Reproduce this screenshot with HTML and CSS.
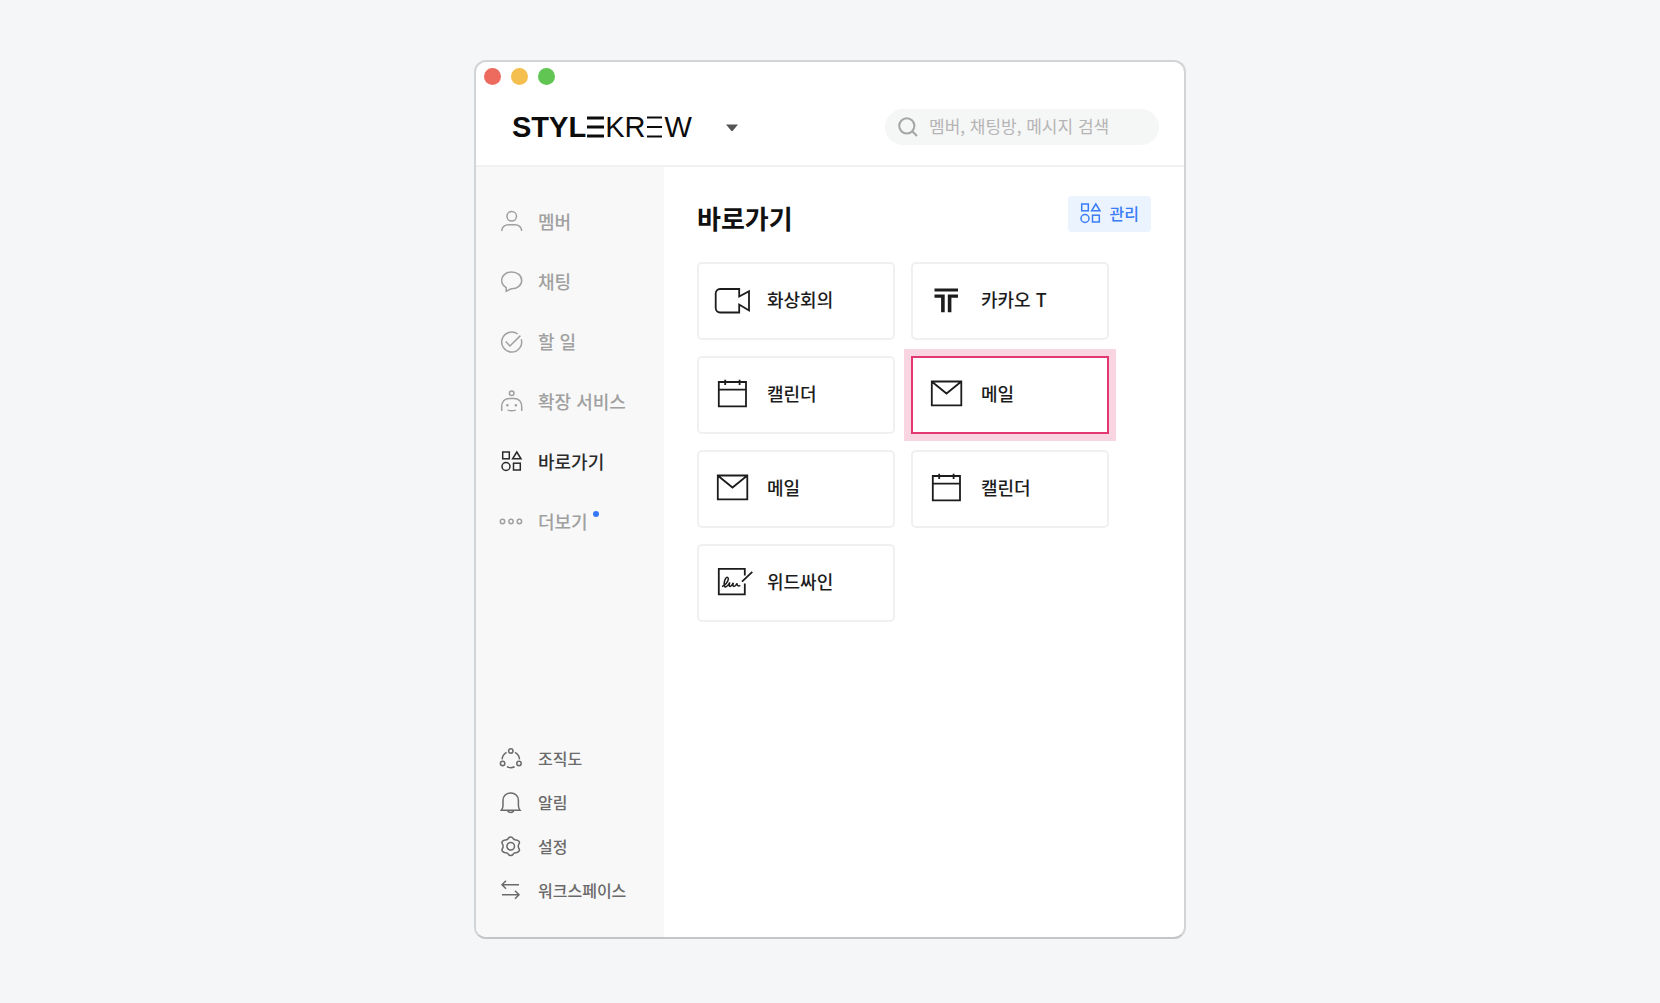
FILE: index.html
```html
<!DOCTYPE html>
<html lang="ko">
<head>
<meta charset="utf-8">
<meta name="viewport" content="width=device-width, initial-scale=1">
<title>바로가기</title>
<link rel="stylesheet" href="styles.css">
</head>
<body>
<svg class="sprite" aria-hidden="true">
  <symbol id="shapes" viewBox="0 0 24 24"><rect x="3.7" y="3" width="6.6" height="6.8"/><path d="M17.8 3 22 9.8H13.6Z"/><circle cx="7" cy="17.500" r="4"/><rect x="14.5" y="14.200" width="6.800" height="6.800"/></symbol>
  <symbol id="calendar" viewBox="0 0 36 36"><path d="M4.8 7H32V31.3H4.8ZM4.8 14.6H32M11.2 4.8V10M25.6 4.8V10"/></symbol>
  <symbol id="mail" viewBox="0 0 36 36"><path d="M3.8 6.5H33.3V30.3H3.8ZM4 6.7 18.5 18.5 33 6.7"/></symbol>
</svg>
<div class="window">
  <div class="titlebar"><span class="light red"></span><span class="light yellow"></span><span class="light green"></span></div>
  <header class="header">
    <button class="workspace" type="button">
      <span class="logo"><b>STYL</b><svg class="bars" viewBox="0 0 17 22" role="img" aria-label="E"><path stroke-width="3.2" d="M0 2H17M0 11H17M0 20H17"/></svg><span>KR</span><svg class="bars" viewBox="0 0 17 22" role="img" aria-label="E"><path stroke-width="2" d="M1 1.5H16M1 11H16M1 20.5H16"/></svg><span>W</span></span>
      <svg class="caret" viewBox="0 0 14 8" aria-hidden="true"><path d="M1 1.500H13L8 7.600Q7 8.600 6 7.600Z"/></svg>
    </button>
    <label class="search">
      <svg class="search-icon" viewBox="0 0 20 20" aria-hidden="true"><circle cx="8.8" cy="8.8" r="7.6"/><path d="m14.3 14.3 4.7 4.7"/></svg>
      <input type="search" placeholder="멤버, 채팅방, 메시지 검색" aria-label="검색">
    </label>
  </header>
  <div class="body">
    <nav class="sidebar">
      <div class="group primary">
        <a href="#"><svg class="icon" viewBox="0 0 24 24"><circle cx="12.7" cy="7.300" r="4.8"/><path d="M2.7 22C2.7 18 6 15.700 9.5 15.700H16C19.5 15.700 22.7 18 22.7 22"/></svg>멤버</a>
        <a href="#"><svg class="icon" viewBox="0 0 24 24"><path d="M7.2 22.2V18.6C4.4 17 2.7 14.4 2.7 11.6 2.7 6.6 7 3 12.7 3S22.7 6.6 22.7 11.4 18.4 19.7 12.7 19.7C10.4 20.3 9.2 21.4 7.2 22.2Z"/></svg>채팅</a>
        <a href="#"><svg class="icon" viewBox="0 0 24 24"><path d="M18.7 5A10 10 0 1 0 22.3 10.200M6.7 12.600 10.9 17 21.4 6.600"/></svg>할 일</a>
        <a href="#"><svg class="icon" viewBox="0 0 24 24"><circle cx="12.7" cy="4.200" r="2.3"/><path d="M2.7 22V17.800C2.7 12.400 6 9.400 10.5 9.400H15C19.500 9.400 22.700 12.400 22.700 17.800V22M8.600 21.100Q12.700 22.300 16.800 21.100"/><path class="solid" d="M7.100 16.200a1.300 1.300 0 1 0 2.600 0a1.300 1.300 0 1 0-2.600 0M15.600 16.200a1.300 1.300 0 1 0 2.600 0a1.300 1.300 0 1 0-2.600 0"/></svg>확장 서비스</a>
        <a href="#" class="active" aria-current="page"><svg class="icon"><use href="#shapes"/></svg>바로가기</a>
        <a href="#"><svg class="icon" viewBox="0 0 24 24"><circle cx="3.5" cy="12.500" r="2.2"/><circle cx="12" cy="12.500" r="2.2"/><circle cx="20.400" cy="12.500" r="2.200"/></svg><span class="badged">더보기<i class="badge"></i></span></a>
      </div>
      <div class="group secondary">
        <a href="#"><svg class="icon" viewBox="0 0 24 24"><circle cx="11.800" cy="5" r="2.200"/><circle cx="3.600" cy="17.500" r="2.200"/><circle cx="20" cy="17.500" r="2.200"/><path d="M7.600 6.300C4.800 8 3.200 10.600 3.100 13.400M16 6.300C18.800 8 20.400 10.600 20.500 13.400M8 20.800Q11.800 22.500 15.600 20.800"/></svg>조직도</a>
        <a href="#"><svg class="icon" viewBox="0 0 24 24"><path d="M2.400 20.200H21C19.800 18.700 19.400 17.300 19.400 15.500V10.300C19.400 5.900 16.200 2.900 11.700 2.900S4 5.900 4 10.300V15.500C4 17.300 3.600 18.700 2.400 20.200ZM8.700 20.500C9.300 23 14.100 23 14.700 20.500"/></svg>알림</a>
        <a href="#"><svg class="icon" viewBox="0 0 24 24"><circle cx="11.700" cy="12.300" r="3.800"/><path d="M9.300 4.500Q10 3 11.700 3T14.100 4.500Q15 6 16.900 5.900Q18.700 5.800 19.900 7.300T19.700 10.300Q18.900 12.300 19.700 14.300Q21.100 15.800 19.900 17.300T16.900 18.700Q15 18.600 14.100 20.100Q13.400 21.600 11.700 21.600T9.300 20.100Q8.400 18.600 6.500 18.700Q4.700 18.800 3.500 17.300T3.700 14.300Q4.500 12.300 3.700 10.300Q2.300 8.800 3.500 7.300T6.500 5.900Q8.400 6 9.300 4.500Z"/></svg>설정</a>
        <a href="#"><svg class="icon" viewBox="0 0 24 24"><path d="M20 6.700H3M7 2.700 3 6.700 7 10.700M3 16.700H20M16 12.700 20 16.700 16 20.700"/></svg>워크스페이스</a>
      </div>
    </nav>
    <main class="content">
      <div class="heading">
        <h1>바로가기</h1>
        <button class="manage" type="button"><svg class="icon" aria-hidden="true"><use href="#shapes"/></svg>관리</button>
      </div>
      <div class="cards">
        <a href="#" class="card"><svg class="card-icon" viewBox="0 0 36 36"><path d="M25.200 8V15.600L35 10.200V29.500L25.200 23.600V31.500H6A4.500 4.500 0 0 1 1.700 27V12.500A4.500 4.500 0 0 1 6 8Z"/></svg>화상회의</a>
        <a href="#" class="card"><svg class="card-icon" viewBox="0 0 36 36"><path class="solid" d="M6.500 7.500H30V10.600H6.500ZM6.500 13.600H16.700V31.300H13.100V16.700H6.500ZM19.800 13.600H30V16.700H23.400V31.300H19.800Z"/></svg>카카오 T</a>
        <a href="#" class="card"><svg class="card-icon"><use href="#calendar"/></svg>캘린더</a>
        <a href="#" class="card highlight"><svg class="card-icon"><use href="#mail"/></svg>메일</a>
        <a href="#" class="card"><svg class="card-icon"><use href="#mail"/></svg>메일</a>
        <a href="#" class="card"><svg class="card-icon"><use href="#calendar"/></svg>캘린더</a>
        <a href="#" class="card"><svg class="card-icon" viewBox="0 0 36 36"><path d="M30.800 12.500V5.800H4.800V31.300H30.800V20.500M28 18.600 38.300 8.800"/><path class="thin" d="M8 23.500C11 22.500 14.500 18.500 14.300 15.800C14 13.200 11.600 14.200 10.700 17.500C9.700 21 10 24.500 12 23.800C14 23 15 20.500 15.800 19.500C15 22 15 23.600 16.200 23.500C17.600 23.200 18.600 21 19.300 19.800C18.700 22 18.800 23.500 20 23.500C21.500 23.300 22.300 21.500 23 20.300C22.800 22.500 24.300 23.800 26.300 22.300"/></svg>위드싸인</a>
      </div>
    </main>
  </div>
</div>
</body>
</html>
```
FILE: styles.css
```css
* { box-sizing: border-box; }

body {
  margin: 0;
  min-height: 100vh;
  padding: 60px 20px 64px;
  display: flex;
  flex-direction: column;
  align-items: center;
  background: #f4f6f8;
  color: #1c1c1c;
  font-family: "Noto Sans CJK KR", sans-serif;
}

a { color: inherit; text-decoration: none; }
button { border: 0; padding: 0; background: none; font: inherit; color: inherit; cursor: pointer; }
svg { flex: none; fill: none; stroke: currentColor; overflow: visible; }
.solid { fill: currentColor; stroke: none; }
.sprite { position: absolute; width: 0; height: 0; }

.window {
  flex: 1;
  display: flex;
  flex-direction: column;
  width: 100%;
  max-width: 712px;
  overflow: hidden;
  background: #fff;
  border: 2px solid #d3d4d5;
  border-bottom-color: #c3c5c6;
  border-radius: 12px;
}

.titlebar { display: flex; gap: 10px; padding: 6px 8px 0; }
.light { width: 17px; height: 17px; border-radius: 50%; }
.red { background: #ec6a5e; }
.yellow { background: #f4bf4f; }
.green { background: #61c554; }

.header {
  display: flex;
  align-items: center;
  justify-content: space-between;
  padding: 24px 25px 20px 36px;
  border-bottom: 2px solid #f1f1f1;
}
.workspace { display: flex; align-items: center; gap: 33px; height: 36px; }
.logo {
  display: flex;
  align-items: center;
  gap: 1px;
  color: #0c0c0c;
  font-family: "Liberation Sans", Arial, sans-serif;
  font-size: 29px;
  line-height: 36px;
}
.bars { width: 17px; height: 22px; }
.caret { width: 14px; height: 8px; fill: #555; stroke: none; }

.search {
  display: flex;
  align-items: center;
  gap: 11px;
  width: 274px;
  height: 36px;
  padding: 0 13px;
  border-radius: 18px;
  background: #f5f6f6;
  color: #a5a5a5;
}
.search-icon { width: 20px; height: 20px; stroke-width: 2; }
.search input {
  flex: 1;
  min-width: 0;
  padding: 0 0 2px;
  border: 0;
  outline: 0;
  background: none;
  color: #333;
  font: 17px/34px "Noto Sans CJK KR", sans-serif;
}
.search input::placeholder { color: #b5b5b5; opacity: 1; }

.body { flex: 1; display: flex; }

.sidebar {
  flex: none;
  width: 188px;
  display: flex;
  flex-direction: column;
  justify-content: space-between;
  padding: 24px 0 25px 23px;
  background: #f8f8f8;
}
.group a { display: flex; align-items: center; gap: 15px; white-space: nowrap; font-weight: 500; }
.primary a { height: 60px; font-size: 18px; color: #a0a0a0; }
.primary .active { color: #2a2a2a; }
.secondary a { height: 44px; font-size: 16px; color: #6a6a6a; }
.icon { width: 24px; height: 24px; stroke-width: 1.5px; }
.badged { position: relative; }
.badge {
  position: absolute;
  top: 3px;
  right: -11px;
  width: 6px;
  height: 6px;
  border-radius: 50%;
  background: #3478f6;
}

.content { flex: 1; min-width: 0; padding: 29px 33px; }
.heading { display: flex; align-items: flex-start; justify-content: space-between; margin-bottom: 22px; }
h1 { margin: 0; color: #111; font-size: 26px; line-height: 44px; font-weight: 700; }
.manage {
  display: flex;
  align-items: center;
  gap: 8px;
  height: 36px;
  padding: 0 12px 2px 10px;
  border-radius: 4px;
  background: #ebf3ff;
  color: #3b7cf7;
  font-size: 16px;
  font-weight: 500;
}

.cards { display: grid; grid-template-columns: repeat(auto-fill, 198px); gap: 16px; }
.card {
  display: flex;
  align-items: center;
  gap: 17px;
  height: 78px;
  padding: 0 0 4px 15px;
  border: 2px solid #f0f0f0;
  border-radius: 5px;
  font-size: 18px;
  font-weight: 500;
}
.card-icon { width: 36px; height: 36px; stroke-width: 1.8px; }
.thin { stroke-width: 1.5px; }
.highlight { border-color: #e2386f; border-radius: 0; box-shadow: 0 0 0 7px #f8d5e0; }
```
